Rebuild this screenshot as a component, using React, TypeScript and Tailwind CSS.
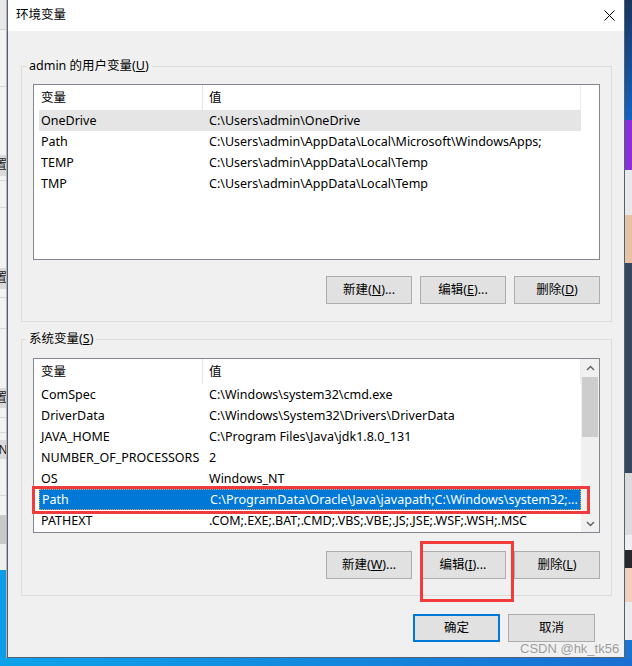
import type { ReactNode } from "react";

type Row = { name: string; value: string; state?: "hover" | "selected" };

const userVars: Row[] = [
  { name: "OneDrive", value: "C:\\Users\\admin\\OneDrive", state: "hover" },
  { name: "Path", value: "C:\\Users\\admin\\AppData\\Local\\Microsoft\\WindowsApps;" },
  { name: "TEMP", value: "C:\\Users\\admin\\AppData\\Local\\Temp" },
  { name: "TMP", value: "C:\\Users\\admin\\AppData\\Local\\Temp" },
];

const systemVars: Row[] = [
  { name: "ComSpec", value: "C:\\Windows\\system32\\cmd.exe" },
  { name: "DriverData", value: "C:\\Windows\\System32\\Drivers\\DriverData" },
  { name: "JAVA_HOME", value: "C:\\Program Files\\Java\\jdk1.8.0_131" },
  { name: "NUMBER_OF_PROCESSORS", value: "2" },
  { name: "OS", value: "Windows_NT" },
  {
    name: "Path",
    value: "C:\\ProgramData\\Oracle\\Java\\javapath;C:\\Windows\\system32;...",
    state: "selected",
  },
  { name: "PATHEXT", value: ".COM;.EXE;.BAT;.CMD;.VBS;.VBE;.JS;.JSE;.WSF;.WSH;.MSC" },
];

// bits of the window behind, visible left of the dialog
const leftStrip = [
  { cls: "h-[29px] bg-[#e8e8e8]" },
  { cls: "h-px bg-[#d0d0d0]" },
  { cls: "h-[56px] bg-[#f3f3f3]" },
  { cls: "h-px bg-[#d8d8d8]" },
  { cls: "h-[68px] bg-[#f3f3f3]" },
  { cls: "h-[21px] bg-[#dadada]", text: "置" },
  { cls: "h-[4px] bg-[#f3f3f3]" },
  { cls: "h-px bg-[#d8d8d8]" },
  { cls: "h-[26px] bg-[#f3f3f3]" },
  { cls: "h-px bg-[#d8d8d8]" },
  { cls: "h-[60px] bg-[#f3f3f3]" },
  { cls: "h-[21px] bg-[#dadada]", text: "置" },
  { cls: "h-[8px] bg-[#f3f3f3]" },
  { cls: "h-px bg-[#d8d8d8]" },
  { cls: "h-[30px] bg-[#f3f3f3]" },
  { cls: "h-px bg-[#d8d8d8]" },
  { cls: "h-[59px] bg-[#f3f3f3]" },
  { cls: "h-[20px] bg-[#dadada]", text: "置" },
  { cls: "h-[9px] bg-[#f3f3f3]" },
  { cls: "h-px bg-[#d8d8d8]" },
  { cls: "h-[14px] bg-[#f3f3f3]" },
  { cls: "h-px bg-[#d8d8d8]" },
  { cls: "h-[7px] bg-[#f3f3f3]" },
  { cls: "h-[19px] bg-[#dadada]", text: "(N" },
  { cls: "h-[36px] bg-[#f3f3f3]" },
  { cls: "h-px bg-[#d8d8d8]" },
  { cls: "h-[19px] bg-[#f3f3f3]" },
  { cls: "h-[29px] bg-[#c9c9c9]" },
  { cls: "h-[26px] bg-[#efefef]" },
  { cls: "flex-1 bg-[#0b9de6]" },
];

// desktop wallpaper visible right of the dialog
const rightStrip = [
  "h-[120px] bg-linear-to-b from-[#17375f] to-[#1463c2]",
  "h-[50px] bg-[#8d2fd8]",
  "h-[45px] bg-[#e9e9e9]",
  "h-[48px] bg-[#e6c3a6]",
  "h-[210px] bg-[#36475f]",
  "h-[62px] bg-[#dcdcdc]",
  "h-[15px] bg-[#efefef]",
  "h-[18px] bg-[#2b2a2a]",
  "h-[34px] bg-[#efd1bd]",
  "h-[38px] bg-[#ececec]",
  "flex-1 bg-[#1a74d2]",
];

function Button({
  children,
  primary,
  wide,
  marker,
}: {
  children: ReactNode;
  primary?: boolean;
  wide?: boolean;
  marker?: boolean;
}) {
  return (
    <div
      className={`relative flex h-[28px] items-center justify-center bg-[#e1e1e1] text-[12.5px] text-black ${
        wide ? "w-[87px]" : "w-[86px]"
      } ${primary ? "border-2 border-[#0078d7]" : "border border-[#adadad]"}`}
    >
      {children}
      {marker && (
        <div className="pointer-events-none absolute -top-[11px] -left-px h-[61px] w-[94px] border-[3px] border-[#f23c3c]" />
      )}
    </div>
  );
}

function Chevron({ down }: { down?: boolean }) {
  return (
    <svg width="9" height="6" viewBox="0 0 9 6" className={down ? "rotate-180" : ""}>
      <path d="M1 5 L4.5 1.5 L8 5" fill="none" stroke="#606060" strokeWidth="1.4" />
    </svg>
  );
}

function ListView({ rows, scroll, className }: { rows: Row[]; scroll?: boolean; className: string }) {
  return (
    <div className={`ml-[11px] mr-[11px] flex border border-[#828790] bg-white ${className}`}>
      <div className="flex w-[547px] flex-col">
        <div className="flex h-[25px] shrink-0 items-center">
          <div className="w-[168px] pt-[2px] pl-[7px]">变量</div>
          <div className="h-full w-px bg-[#e5e5e5]" />
          <div className="flex-1 pt-[2px] pl-[6px]">值</div>
          <div className="h-full w-px bg-[#ececec]" />
        </div>
        {rows.map((row) => (
          <div
            key={row.name}
            className={`relative ml-[5px] flex h-[21px] w-[542px] shrink-0 items-center whitespace-nowrap ${
              row.state === "selected"
                ? "border border-dotted border-[#e3a563] bg-[#0078d7] text-white"
                : row.state === "hover"
                  ? "bg-[#e5e5e5]"
                  : ""
            }`}
          >
            <div className="w-[163px] shrink-0 pt-[2px] pl-[2px]">{row.name}</div>
            <div className="min-w-0 flex-1 overflow-hidden pt-[2px] pl-[7px]">{row.value}</div>
            {row.state === "selected" && (
              <div className="pointer-events-none absolute -top-[4px] -right-[10px] -bottom-[5px] -left-[8px] border-[3px] border-[#ef3b3b]" />
            )}
          </div>
        ))}
      </div>
      {scroll && (
        <div className="flex w-[18px] flex-col bg-[#f0f0f0]">
          <div className="flex h-[17px] items-center justify-center">
            <Chevron />
          </div>
          <div className="mx-px mt-px h-[60px] bg-[#cdcdcd]" />
          <div className="flex-1" />
          <div className="flex h-[17px] items-center justify-center">
            <Chevron down />
          </div>
        </div>
      )}
    </div>
  );
}

function Group({ label, children, className }: { label: ReactNode; children: ReactNode; className: string }) {
  return (
    <div className={`ml-[13px] mr-[12px] flex flex-col border border-[#dcdcdc] ${className}`}>
      <div className="-mt-[9px] ml-[4px] self-start bg-[#f0f0f0] px-[3px] leading-[16px]">{label}</div>
      {children}
    </div>
  );
}

export default function App() {
  return (
    <div className="relative grid h-[666px] w-[632px] grid-cols-[7px_618px_7px] grid-rows-[658px_8px] overflow-hidden font-['Noto_Sans','Noto_Sans_CJK_SC',sans-serif] text-[12.5px] text-black">
      <div className="flex flex-col border-r border-[#b4b4b4]">
        {leftStrip.map((b, i) => (
          <div key={i} className={`${b.cls} overflow-hidden whitespace-nowrap text-[12px] leading-[20px] -indent-[5px] text-[#1a1a1a]`}>
            {b.text}
          </div>
        ))}
      </div>

      <div className="flex flex-col border-r border-b border-l border-[#52626e] bg-[#f0f0f0]">
        <div className="flex h-[31px] shrink-0 items-center justify-between bg-white">
          <span className="pl-[8px]">环境变量</span>
          <svg width="11" height="11" viewBox="0 0 11 11" className="mr-[9px]">
            <path d="M0.5 0.5 L10.5 10.5 M10.5 0.5 L0.5 10.5" stroke="#000" strokeWidth="1" />
          </svg>
        </div>

        <Group
          className="mt-[35px]"
          label={
            <>
              admin 的用户变量(<u>U</u>)
            </>
          }
        >
          <ListView rows={userVars} className="mt-[10px] h-[176px]" />
          <div className="mt-[16px] mb-[17px] mr-[11px] flex justify-end gap-[8px]">
            <Button>
              新建(<u>N</u>)...
            </Button>
            <Button>
              编辑(<u>E</u>)...
            </Button>
            <Button>
              删除(<u>D</u>)
            </Button>
          </div>
        </Group>

        <Group
          className="mt-[17px]"
          label={
            <>
              系统变量(<u>S</u>)
            </>
          }
        >
          <ListView rows={systemVars} scroll className="mt-[11px] h-[175px]" />
          <div className="mt-[18px] mb-[16px] mr-[11px] flex justify-end gap-[8px]">
            <Button>
              新建(<u>W</u>)...
            </Button>
            <Button marker>
              编辑(<u>I</u>)...
            </Button>
            <Button>
              删除(<u>L</u>)
            </Button>
          </div>
        </Group>

        <div className="mt-[18px] mr-[29px] flex justify-end gap-[8px]">
          <Button primary wide>
            确定
          </Button>
          <Button wide>取消</Button>
        </div>
      </div>

      <div className="flex flex-col">
        {rightStrip.map((cls, i) => (
          <div key={i} className={cls} />
        ))}
      </div>

      <div className="col-span-3 bg-linear-to-r from-[#0ea2ea] to-[#1a6fd3]" />

      <div className="absolute top-[641px] left-[520px] font-['Liberation_Sans',sans-serif] text-[13px] leading-[16px] text-[#9a9a9a] [text-shadow:0_0_1px_#ffffff]">
        CSDN @hk_tk56
      </div>
    </div>
  );
}
